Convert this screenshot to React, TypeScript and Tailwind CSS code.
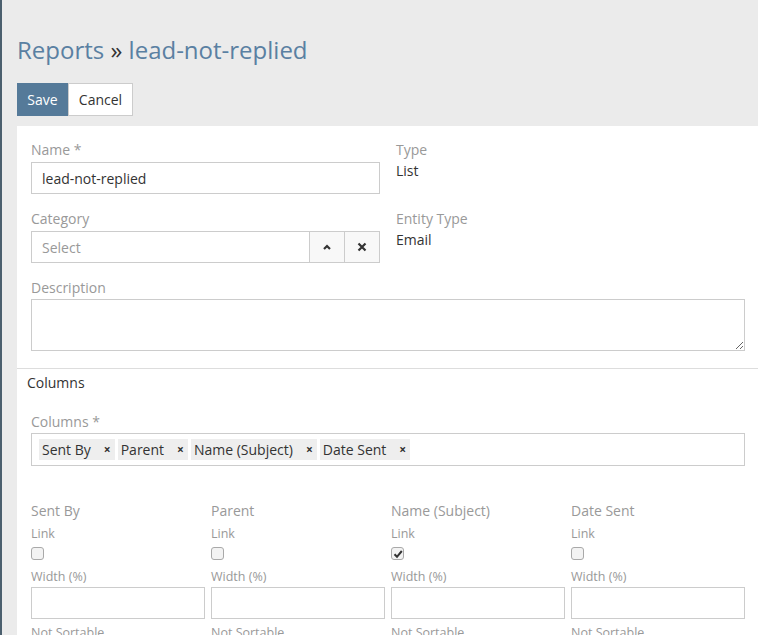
import React from "react";

const font = { fontFamily: '"Open Sans", "Noto Sans", sans-serif' };

function Check({ checked }: { checked?: boolean }) {
  return (
    <span className="flex h-[13px] w-[13px] items-center justify-center rounded-[3px] border border-[#a9a9a9] bg-[#f3f3f3]">
      {checked && (
        <svg width="10" height="10" viewBox="0 0 10 10">
          <path d="M1.5 5.2 L4 7.8 L8.8 2" fill="none" stroke="#333" strokeWidth="2" />
        </svg>
      )}
    </span>
  );
}

function Chip({ label }: { label: string }) {
  return (
    <span className="flex h-[21px] items-center bg-[#eeeeee] pl-[3px] pr-[4px] text-[14px] text-[#333]">
      <span>{label}</span>
      <span className="ml-[13px] text-[12px] font-bold leading-none">×</span>
    </span>
  );
}

function ColumnSettings({ name, checked }: { name: string; checked?: boolean }) {
  return (
    <div className="flex flex-col">
      <div className="h-[20px] text-[14px] leading-[20px] text-[#999]">{name}</div>
      <div className="mt-[5px] h-[16px] text-[12.5px] leading-[16px] text-[#999]">Link</div>
      <div className="mt-[5px] h-[13px]">
        <Check checked={checked} />
      </div>
      <div className="mt-[9px] h-[16px] text-[12.5px] leading-[16px] text-[#999]">Width (%)</div>
      <div className="mt-[2px] h-[32px] border border-[#ccc] bg-white"></div>
      <div className="mt-[6px] h-[16px] text-[12.5px] leading-[16px] text-[#999]">Not Sortable</div>
    </div>
  );
}

export default function App() {
  return (
    <div className="flex h-[635px] w-[758px] overflow-hidden bg-[#ebebeb]" style={font}>
      <div className="w-[2px] shrink-0 bg-[#4b5f6e]"></div>
      <div className="flex min-w-0 flex-1 flex-col pl-[15px]">
        <h1 className="mt-[34px] h-[32px] shrink-0 text-[24px] leading-[32px] text-[#5a80a2]">
          Reports <span className="text-[#333]">»</span> lead-not-replied
        </h1>
        <div className="mt-[17px] flex h-[33px] shrink-0">
          <button className="w-[51px] bg-[#557a99] text-[14px] text-white">Save</button>
          <button className="w-[65px] border border-[#ccc] bg-white text-[14px] text-[#333]">Cancel</button>
        </div>
        <div className="mt-[10px] flex-1 shrink-0 bg-white">
          <div className="pl-[14px] pr-[13px] pt-[14px]">
            <div className="grid grid-cols-2 gap-x-[16px]">
              <div className="flex flex-col">
                <div className="h-[20px] text-[14px] leading-[20px] text-[#999]">Name *</div>
                <div className="mt-[2px] flex h-[32px] items-center border border-[#ccc] px-[10px] text-[14px] text-[#333]">
                  lead-not-replied
                </div>
                <div className="mt-[15px] h-[20px] text-[14px] leading-[20px] text-[#999]">Category</div>
                <div className="mt-[2px] flex h-[32px] border border-[#ccc]">
                  <div className="flex flex-1 items-center px-[10px] text-[14px] text-[#999]">Select</div>
                  <div className="flex w-[35px] items-center justify-center border-l border-[#ccc] bg-[#f8f8f8]">
                    <svg width="10" height="8" viewBox="0 0 10 8">
                      <path d="M2 6 L5 3 L8 6" fill="none" stroke="#333" strokeWidth="2.2" />
                    </svg>
                  </div>
                  <div className="flex w-[35px] items-center justify-center border-l border-[#ccc] bg-[#f8f8f8]">
                    <svg width="10" height="10" viewBox="0 0 10 10">
                      <path d="M1.5 1.5 L8.5 8.5 M8.5 1.5 L1.5 8.5" fill="none" stroke="#333" strokeWidth="2.2" />
                    </svg>
                  </div>
                </div>
              </div>
              <div className="flex flex-col">
                <div className="h-[20px] text-[14px] leading-[20px] text-[#999]">Type</div>
                <div className="mt-[1px] h-[20px] text-[14px] leading-[20px] text-[#333]">List</div>
                <div className="mt-[28px] h-[20px] text-[14px] leading-[20px] text-[#999]">Entity Type</div>
                <div className="mt-[1px] h-[20px] text-[14px] leading-[20px] text-[#333]">Email</div>
              </div>
            </div>
            <div className="mt-[15px] h-[20px] text-[14px] leading-[20px] text-[#999]">Description</div>
            <textarea className="mt-[1px] block h-[52px] w-full border border-[#ccc] outline-none"></textarea>
          </div>
          <div className="mt-[17px] h-px bg-[#ddd]"></div>
          <div className="pl-[10px] pt-[4px] h-[20px] text-[14px] leading-[20px] text-[#333]" style={{ boxSizing: "content-box" }}>
            Columns
          </div>
          <div className="pl-[14px] pr-[13px]">
            <div className="mt-[19px] h-[20px] text-[14px] leading-[20px] text-[#999]">Columns *</div>
            <div className="mt-[1px] flex h-[33px] items-center gap-[3px] border border-[#ccc] pl-[7px]">
              <Chip label="Sent By" />
              <Chip label="Parent" />
              <Chip label="Name (Subject)" />
              <Chip label="Date Sent" />
            </div>
            <div className="mt-[35px] grid grid-cols-4 gap-x-[6px]">
              <ColumnSettings name="Sent By" />
              <ColumnSettings name="Parent" />
              <ColumnSettings name="Name (Subject)" checked />
              <ColumnSettings name="Date Sent" />
            </div>
          </div>
        </div>
      </div>
    </div>
  );
}
